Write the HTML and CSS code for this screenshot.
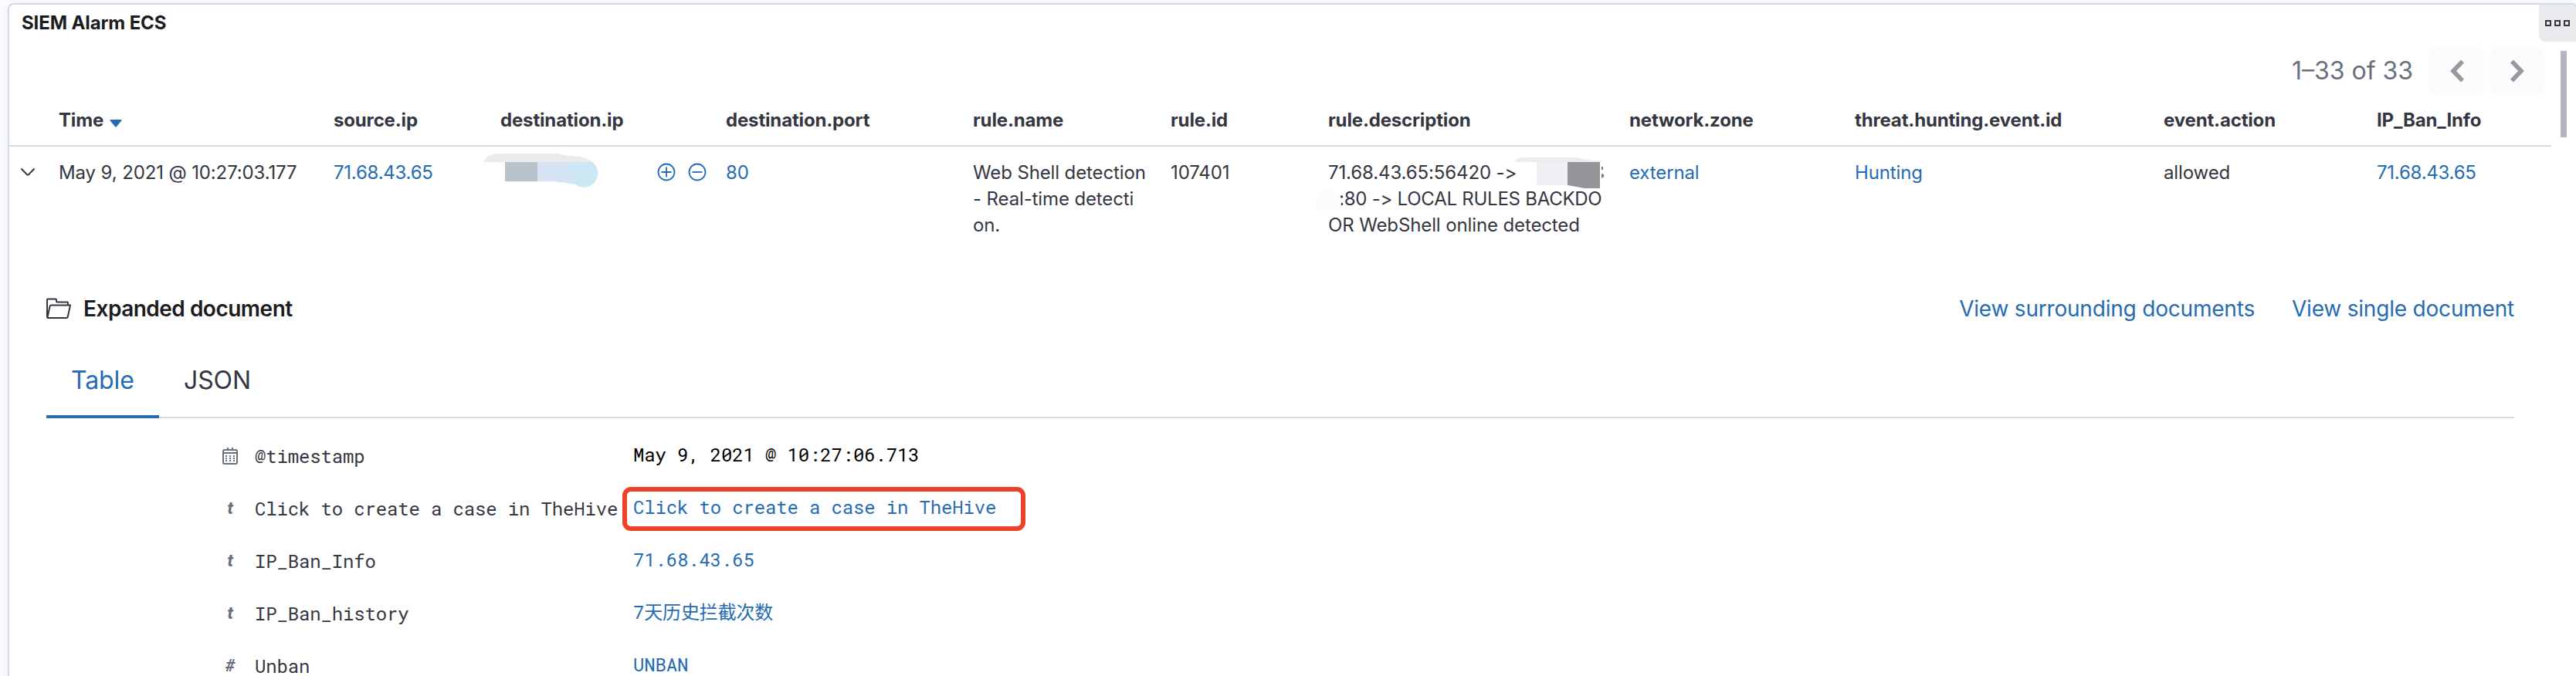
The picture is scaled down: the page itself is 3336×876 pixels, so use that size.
FILE: index.html
```html
<!DOCTYPE html>
<html lang="en">
<head>
<meta charset="utf-8">
<title>SIEM Alarm ECS</title>
<link rel="stylesheet" href="styles.css">
</head>
<body>
<main class="panel">
  <header class="panel-head">
    <h2 class="panel-title">SIEM Alarm ECS</h2>
    <button class="options" aria-label="Panel options"><i></i><i></i><i></i></button>
  </header>
  <div class="pager">
    <span class="pager-text">1–33 of 33</span>
    <button class="pager-btn prev" aria-label="Previous"><svg width="20" height="30" viewBox="0 0 20 30"><path d="M18 2.500 6 15l12 12.500"/></svg></button>
    <button class="pager-btn next" aria-label="Next"><svg width="20" height="30" viewBox="0 0 20 30"><path d="M3 2.500 15 15 3 27.500"/></svg></button>
  </div>
  <div class="scrollbar"></div>

  <section class="grid-row grid-head">
    <span></span>
    <span>Time<svg class="sort" width="16" height="10" viewBox="0 0 16 10"><path d="M1.200 0h13.600q1.200.4.400 1.400L9 9q-1 1-2 0L.8 1.400Q0 .4 1.200 0z"/></svg></span>
    <span>source.ip</span>
    <span>destination.ip</span>
    <span>destination.port</span>
    <span>rule.name</span>
    <span>rule.id</span>
    <span>rule.description</span>
    <span>network.zone</span>
    <span>threat.hunting.event.id</span>
    <span>event.action</span>
    <span>IP_Ban_Info</span>
  </section>

  <section class="grid-row grid-body">
    <span class="toggle"><svg width="20" height="12" viewBox="0 0 20 12"><path d="M1.500 1.500l7.500 7.800q1 .8 2 0l7.500-7.800"/></svg></span>
    <span>May 9, 2021 @ 10:27:03.177</span>
    <a class="ip">71.68.43.65</a>
    <span class="cell-ip">
      <svg class="mask mask-ip" width="150" height="46" viewBox="0 0 150 46"><path fill="#ebebeb" d="M0 11Q6 0 18 0h78q6 1 11 2.500l17 1.500q10 1 18 7z"/><path fill="#b7c2ca" d="M28 11h42v25H28z"/><path fill="#d6e3f3" d="M70 11h42v28l-20-3H70z"/><path fill="#cbe8f4" d="M112 11h29a18 18 0 0 1-22 29l-7-1z"/></svg>
      <svg class="filters" width="64" height="24" viewBox="0 0 64 24"><circle cx="12" cy="12" r="10.500"/><path d="M5.500 12h13M12 5.500v13"/><circle cx="52" cy="12" r="10.500"/><path d="M45.500 12h13"/></svg>
    </span>
    <a>80</a>
    <span>Web Shell detection<br>- Real-time detecti<br>on.</span>
    <span>107401</span>
    <span class="cell-desc">71.68.43.65:56420 -&gt;<br><span class="indent">:80 -&gt; LOCAL RULES BACKDO</span><br>OR WebShell online detected
      <svg class="mask mask-desc" width="380" height="80" viewBox="0 0 380 80"><circle fill="#fcfcfc" cx="17" cy="58" r="17"/><path fill="#ececec" d="M257 6Q262 0 270 0h66q14 2 22 4h14v2z"/><path fill="#efeff4" d="M287 6h40v30h-40z"/><path fill="#949499" d="M327 6h42v34h-20l-22-4z"/><path fill="#77797f" d="M371 12h2v4h-2zM371 21l3 1v3l-3 2z"/></svg>
    </span>
    <a>external</a>
    <a>Hunting</a>
    <span>allowed</span>
    <a class="ip">71.68.43.65</a>
  </section>

  <section class="doc">
    <div class="doc-head">
      <svg class="folder" width="32" height="28" viewBox="0 0 32 28"><path d="M1 25.500V2.500q0-1 1-1h10q1 0 1 1v2q0 1 1 1h13q1 0 1 1v3M1.500 25.500 4.500 11q.3-1.500 1.800-1.500H31l-3.200 15q-.3 1.500-1.800 1.500H2q-1 0-.5-1.500z"/></svg>
      <h3 class="doc-title">Expanded document</h3>
      <a class="doc-link">View surrounding documents</a>
      <a class="doc-link">View single document</a>
    </div>
    <nav class="tabs">
      <a class="tab tab-on">Table</a>
      <a class="tab">JSON</a>
    </nav>
    <dl class="fields">
      <dt><svg class="ico" width="20" height="24" viewBox="0 0 20 24"><rect x="1" y="4" width="18" height="18" rx="2"/><path d="M1 8h18M7 1v3M13 1v3"/><path class="dots" d="M4 12h12M4 15h12M4 18h12"/></svg>@timestamp</dt>
      <dd class="plain">May 9, 2021 @ 10:27:06.713</dd>
      <dt><em class="ico">t</em>Click to create a case in TheHive</dt>
      <dd><span class="callout">Click to create a case in TheHive</span></dd>
      <dt><em class="ico">t</em>IP_Ban_Info</dt>
      <dd>71.68.43.65</dd>
      <dt><em class="ico">t</em>IP_Ban_history</dt>
      <dd>7天历史拦截次数</dd>
      <dt><em class="ico">#</em>Unban</dt>
      <dd>UNBAN</dd>
    </dl>
  </section>
</main>
</body>
</html>
```
FILE: styles.css
```css
*, ::after { box-sizing: border-box; }
html, body { margin: 0; height: 876px; overflow: hidden; }
body {
  background: #fafbfd;
  padding: 4px 0 0 10px;
  font-family: Inter, "Liberation Sans", sans-serif;
  font-size: 24px;
  line-height: 34px;
  letter-spacing: -0.12px;
  color: #343741;
}
button { border: 0; padding: 0; font: inherit; }
a { color: #266bb3; }

.panel {
  position: relative;
  width: 3328px;
  height: 872px;
  background: #fff;
  border: 2px solid #d3dae6;
  border-bottom: 0;
  border-radius: 8px 8px 0 0;
  box-shadow: 0 2px 8px rgba(152, 162, 179, .15);
}
.panel-head { display: flex; justify-content: space-between; height: 48px; padding-left: 16px; }
.panel-title { margin: 0; font-size: 24px; line-height: 48px; font-weight: 700; color: #1a1c21; }
.options {
  display: flex; align-items: center; gap: 4px;
  width: 48px; height: 48px; padding: 0 0 0 8px;
  background: #e9eaeb;
  border-radius: 0 8px 0 8px;
}
.options i { width: 8px; height: 8px; border: 2px solid #343741; }

.pager { display: flex; align-items: center; justify-content: flex-end; height: 60px; margin-top: 8px; padding-right: 41px; }
.pager-text { margin-right: 20px; font-size: 32px; letter-spacing: 0; color: #69707d; }
.pager-btn { display: flex; align-items: center; justify-content: center; height: 60px; background: #fafbfd; border-radius: 8px; }
.pager-btn svg { fill: none; stroke: #98989d; stroke-width: 5.600; }
.prev { width: 72px; margin-right: 8px; }
.next { width: 70px; }
.scrollbar { position: absolute; left: 3304px; top: 60px; width: 8px; height: 112px; background: #b2b5bd; }

.grid-row {
  display: grid;
  grid-template-columns: 64px 356px 216px 292px 320px 256px 204px 390px 292px 400px 276px 226px;
  width: 3292px;
}
.grid-head { height: 68px; padding-top: 17px; border-bottom: 2px solid #d3dae6; font-weight: 700; letter-spacing: -0.16px; }
.sort { margin-left: 8px; vertical-align: -1px; fill: #266bb3; }
.grid-body { height: 178px; padding-top: 17px; }
.toggle { padding-left: 14px; }
.toggle svg { display: block; margin-top: 10px; fill: none; stroke: #343741; stroke-width: 2; }
.ip { letter-spacing: -0.24px; }
.cell-ip { position: relative; }
.mask { position: absolute; }
.mask-ip { left: -22px; top: -8px; }
.filters { display: block; margin: 4px 0 0 203px; fill: none; stroke: #266bb3; stroke-width: 1.800; }
.cell-desc { position: relative; }
.indent { margin-left: 14px; letter-spacing: -0.250px; }
.mask-desc { left: -17px; top: -3px; }

.doc { width: 3196px; margin-left: 48px; }
.doc-head { display: flex; align-items: center; height: 64px; font-size: 28px; letter-spacing: -0.2px; }
.folder { fill: none; stroke: #343741; stroke-width: 2; }
.doc-title { flex: 1; margin: 0 0 0 16px; font-size: 28px; font-weight: 600; letter-spacing: -0.5px; color: #1a1c21; }
.doc-link { margin-left: 48px; }
.tabs { display: flex; height: 110px; padding-top: 30px; border-bottom: 2px solid #d3dae6; font-size: 32px; letter-spacing: -0.1px; }
.tab { height: 80px; padding: 0 32px; line-height: 62px; color: #343741; }
.tab-on { width: 146px; color: #266bb3; border-bottom: 4px solid #266bb3; }

.fields {
  display: grid;
  grid-template-columns: 532px 1fr;
  grid-template-rows: repeat(4, 68px) 44px;
  margin: 15px 0 0 228px;
  font-family: "Roboto Mono", "DejaVu Sans Mono", "Noto Sans CJK SC", monospace;
  font-size: 24px;
  letter-spacing: -0.15px;
  line-height: 68px;
  white-space: nowrap;
}
.fields dt { display: flex; align-items: center; height: 68px; }
.fields dd { margin: -2px 0 0; color: #266bb3; }
.fields .plain { color: #000; }
.ico { width: 20px; margin-right: 22px; text-align: center; font: italic 800 22px/66px "Roboto", sans-serif; color: #69707d; }
svg.ico { fill: none; stroke: #69707d; stroke-width: 2; }
.dots { stroke-dasharray: 2 3; }
.callout { position: relative; }
.callout::after {
  content: "";
  position: absolute;
  left: -14px; top: -10px;
  width: 522px; height: 57px;
  border: 6px solid #ee4226;
  border-radius: 11px;
}
```
